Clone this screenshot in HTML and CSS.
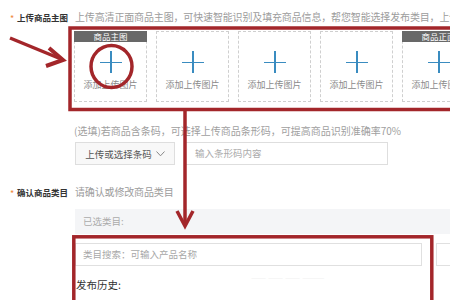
FILE: index.html
```html
<!DOCTYPE html>
<html lang="zh-CN">
<head>
    <meta charset="UTF-8">
    <meta name="viewport" content="width=device-width, initial-scale=1.0">
    <title>发布商品</title>
    <link rel="stylesheet" href="styles.css">
</head>
<body>
    <div class="page">
        <div class="field-head">
            <span class="req">*</span>
            <span class="label">上传商品主图</span>
            <span class="tip">上传高清正面商品主图，可快速智能识别及填充商品信息，帮您智能选择发布类目，上传</span>
        </div>
        <div class="uploads">
            <div class="upload">
                <div class="badge">商品主图</div>
                <span class="plus"></span>
                <span class="upload-text">添加上传图片</span>
            </div>
            <div class="upload">
                <span class="plus"></span>
                <span class="upload-text">添加上传图片</span>
            </div>
            <div class="upload">
                <span class="plus"></span>
                <span class="upload-text">添加上传图片</span>
            </div>
            <div class="upload">
                <span class="plus"></span>
                <span class="upload-text">添加上传图片</span>
            </div>
            <div class="upload">
                <div class="badge">商品正面</div>
                <span class="plus"></span>
                <span class="upload-text">添加上传图片</span>
            </div>
        </div>
        <div class="indent hint">(选填)若商品含条码，可选择上传商品条形码，可提高商品识别准确率70%</div>
        <div class="indent barcode">
            <button class="barcode-btn">上传或选择条码
                <svg width="9" height="6" viewBox="0 0 9 6"><path d="M0.5 0.5 L4.5 4.8 L8.5 0.5" fill="none" stroke="#888" stroke-width="1"/></svg>
            </button>
            <div class="barcode-input">输入条形码内容</div>
        </div>

        <div class="field-head second">
            <span class="req">*</span>
            <span class="label">确认商品类目</span>
            <span class="tip">请确认或修改商品类目</span>
        </div>
        <div class="indent selected">已选类目:</div>
        <div class="indent search-row">
            <div class="search-input">类目搜索：可输入产品名称</div>
            <div class="search-btn"></div>
        </div>
        <div class="indent history">
            <span class="history-title">发布历史:</span>
            <div class="history-faint">
                <span>—— —— —— ———</span>
            </div>
        </div>

        <svg class="marks" width="450" height="300" viewBox="0 0 450 300">
            <g fill="none" stroke="#a3262a" stroke-width="3.5">
                <rect x="70" y="28" width="400" height="81.5"/>
                <ellipse cx="111.5" cy="66.5" rx="20.5" ry="21"/>
                <path d="M10 38 L61 59"/>
                <path d="M49 48 L63 60 L46 66" stroke-width="4" stroke-linejoin="miter"/>
                <path d="M185 111 L185 224"/>
                <path d="M177 211 L185 226 L193 211" stroke-width="3.5"/>
                <rect x="73.8" y="236.8" width="358" height="90"/>
            </g>
        </svg>
    </div>
</body>
</html>
```
FILE: styles.css
```css
body {
    margin: 0;
    background: #fff;
    font-family: "Noto Sans CJK SC", "Noto Sans", sans-serif;
    overflow: hidden;
}
.page {
    position: relative;
    width: 450px;
    height: 300px;
    padding: 10px 0 0 10px;
    box-sizing: border-box;
    overflow: hidden;
}
.field-head {
    display: flex;
    align-items: center;
    height: 14px;
    line-height: 14px;
    white-space: nowrap;
}
.req {
    flex: 0 0 7px;
    color: #f0883a;
    font-size: 9px;
    padding-top: 3px;
}
.label {
    flex: 0 0 58px;
    font-size: 8.5px;
    font-weight: bold;
    color: #333;
}
.tip {
    flex-shrink: 0;
    font-size: 10px;
    color: #9c9c9c;
    letter-spacing: -0.15px;
}
.indent {
    margin-left: 65px;
}
.uploads {
    display: flex;
    gap: 9px;
    margin: 7px 0 0 64px;
}
.upload {
    position: relative;
    flex: 0 0 73px;
    height: 71px;
    box-sizing: border-box;
    border: 1px dashed #cfcfcf;
    display: flex;
    flex-direction: column;
    align-items: center;
    padding-top: 19px;
}
.badge {
    position: absolute;
    top: -1px;
    left: -1px;
    right: -1px;
    height: 11px;
    line-height: 11px;
    background: #686868;
    color: #fff;
    font-size: 8.5px;
    text-align: center;
}
.plus {
    position: relative;
    width: 22px;
    height: 22px;
}
.plus::before,
.plus::after {
    content: "";
    position: absolute;
    background: #3a8cc0;
}
.plus::before {
    left: 0;
    right: 0;
    top: 10.5px;
    height: 1.5px;
}
.plus::after {
    top: 0;
    bottom: 0;
    left: 10.5px;
    width: 1.5px;
}
.upload-text {
    margin-top: 6px;
    font-size: 9px;
    line-height: 12px;
    color: #8a8a8a;
    white-space: nowrap;
}
.hint {
    margin-top: 22px;
    margin-left: 64px;
    font-size: 10px;
    line-height: 14px;
    color: #a0a0a0;
    white-space: nowrap;
}
.barcode {
    display: flex;
    gap: 10px;
    margin-top: 4px;
}
.barcode-btn {
    width: 100px;
    height: 23px;
    border: 1px solid #dedede;
    background: #f8f8f8;
    color: #555;
    font-family: inherit;
    font-size: 9.5px;
    display: flex;
    align-items: center;
    justify-content: center;
    gap: 4px;
    padding: 0;
}
.barcode-input {
    width: 203px;
    height: 23px;
    box-sizing: border-box;
    border: 1px solid #dedede;
    padding-left: 9px;
    font-size: 9.5px;
    line-height: 21px;
    color: #ababab;
}
.second {
    margin-top: 20px;
}
.selected {
    margin-top: 10px;
    height: 25px;
    line-height: 25px;
    padding-left: 8px;
    background: #f4f5f7;
    font-size: 9.5px;
    color: #ababab;
}
.search-row {
    display: flex;
    gap: 14px;
    margin-top: 9px;
}
.search-input {
    width: 347px;
    height: 23px;
    box-sizing: border-box;
    border: 1px solid #e0e0e0;
    padding-left: 7px;
    font-size: 9.5px;
    line-height: 21px;
    color: #a8a8a8;
    flex-shrink: 0;
}
.search-btn {
    width: 40px;
    height: 23px;
    box-sizing: border-box;
    border: 1px solid #e0e0e0;
    flex-shrink: 0;
}
.history {
    margin-top: 11px;
    margin-left: 66px;
    display: flex;
    align-items: center;
    height: 14px;
}
.history-title {
    font-size: 10.5px;
    color: #333;
    white-space: nowrap;
}
.history-faint {
    margin-left: 130px;
    margin-top: -14px;
    font-size: 9px;
    color: #f1f1f1;
    white-space: nowrap;
}
.marks {
    position: absolute;
    top: 0;
    left: 0;
    pointer-events: none;
}
```
